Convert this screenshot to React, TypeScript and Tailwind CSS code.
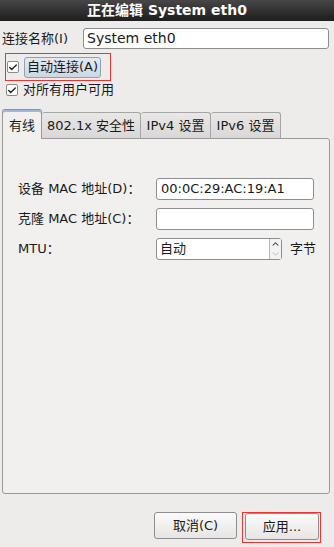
import { ChevronUp, ChevronDown, Check } from 'lucide-react';

const font = { fontFamily: '"DejaVu Sans", "Noto Sans CJK SC", sans-serif' };

function CheckBox() {
  return (
    <span className="flex h-[12px] w-[12px] shrink-0 items-center justify-center rounded-[2px] border border-[#8a8a8a] bg-white">
      <Check className="h-[11px] w-[11px] text-[#222]" strokeWidth={3.2} />
    </span>
  );
}

export default function App() {
  return (
    <div className="flex h-[547px] w-[334px] flex-col whitespace-nowrap bg-[#edeceb] text-[13px] text-[#1a1a1a]" style={font}>
      {/* 标题栏 */}
      <div className="flex h-[21px] items-center justify-center bg-gradient-to-b from-[#474747] to-[#1e1e1e] text-[14px] font-bold text-white">
        正在编辑 System eth0
      </div>

      {/* 连接名称 */}
      <div className="mt-[7px] flex h-[21px] items-center pl-[2px] pr-[5px]">
        <span className="w-[81px]">连接名称(I)</span>
        <div className="flex h-[21px] flex-1 items-center rounded-[3px] border border-[#8e8e8e] bg-white pl-[3px] text-[14px]">
          System eth0
        </div>
      </div>

      {/* 自动连接 */}
      <div className="mt-[4px] flex">
        <div className="ml-[5px] flex h-[28px] w-[106px] items-center gap-[5px] border border-[#ee3333] pl-[1px]">
          <CheckBox />
          <span className="flex h-[21px] w-[77px] items-center justify-center rounded-[3px] border border-[#8aa0bb] bg-gradient-to-b from-[#e2e9f2] to-[#ccd8e6]">
            自动连接(A)
          </span>
        </div>
      </div>
      <div className="mt-[2px] flex h-[14px] items-center gap-[5px] pl-[6px]">
        <CheckBox />
        <span>对所有用户可用</span>
      </div>

      {/* 选项卡 */}
      <div className="mt-[12px] flex items-end pl-[2px]">
        <div className="z-10 -mb-px flex h-[30px] w-[40px] items-center justify-center rounded-t-[3px] border border-b-0 border-[#9a9a9a] border-t-[#6f95c4] bg-[#f1f0ef] pt-[3px] shadow-[inset_0_2px_0_#9cb9dd]">
          有线
        </div>
        <div className="flex h-[26px] w-[99px] items-center justify-center rounded-t-[3px] border border-b-0 border-l-0 border-[#a5a5a5] bg-gradient-to-b from-[#e9e8e7] to-[#d9d8d7]">
          802.1x 安全性
        </div>
        <div className="flex h-[26px] w-[70px] items-center justify-center rounded-t-[3px] border border-b-0 border-l-0 border-[#a5a5a5] bg-gradient-to-b from-[#e9e8e7] to-[#d9d8d7]">
          IPv4 设置
        </div>
        <div className="flex h-[26px] w-[70px] items-center justify-center rounded-t-[3px] border border-b-0 border-l-0 border-[#a5a5a5] bg-gradient-to-b from-[#e9e8e7] to-[#d9d8d7]">
          IPv6 设置
        </div>
      </div>

      {/* 面板 */}
      <div className="ml-[2px] flex h-[356px] w-[328px] flex-col rounded-b-[3px] rounded-tr-[3px] border border-[#9a9a9a] bg-[#f1f0ef] pl-[15px] pt-[39px]">
        <div className="flex h-[22px] items-center">
          <span className="w-[138px]">设备 MAC 地址(D)：</span>
          <div className="flex h-[22px] w-[158px] items-center rounded-[3px] border border-[#8e8e8e] bg-white pl-[4px]">
            00:0C:29:AC:19:A1
          </div>
        </div>
        <div className="mt-[8px] flex h-[22px] items-center">
          <span className="w-[138px]">克隆 MAC 地址(C)：</span>
          <div className="h-[22px] w-[158px] rounded-[3px] border border-[#8e8e8e] bg-white" />
        </div>
        <div className="mt-[8px] flex h-[22px] items-center">
          <span className="w-[138px]">MTU：</span>
          <div className="flex h-[22px] w-[126px] items-center rounded-[3px] border border-[#8e8e8e] bg-white pl-[3px]">
            <span className="flex-1">自动</span>
            <div className="flex h-[20px] w-[12px] flex-col border-l border-[#b5b5b5] bg-[#f3f3f3]">
              <ChevronUp className="h-[10px] w-[11px] text-[#333]" strokeWidth={2.5} />
              <ChevronDown className="h-[10px] w-[11px] text-[#b0b0b0]" strokeWidth={2} />
            </div>
          </div>
          <span className="ml-[8px]">字节</span>
        </div>
      </div>

      {/* 按钮 */}
      <div className="mt-[18px] flex items-start pl-[154px]">
        <div className="flex h-[27px] w-[83px] items-center justify-center rounded-[3px] border border-[#8e8e8e] bg-gradient-to-b from-[#fbfbfb] to-[#e6e5e4]">
          取消(C)
        </div>
        <div className="ml-[5px] h-[31px] w-[79px] border border-[#ee3333] pl-[2px]">
          <div className="flex h-[27px] w-[74px] items-center justify-center rounded-[3px] border border-[#8e8e8e] bg-gradient-to-b from-[#fbfbfb] to-[#e6e5e4]">
            应用...
          </div>
        </div>
      </div>
    </div>
  );
}
